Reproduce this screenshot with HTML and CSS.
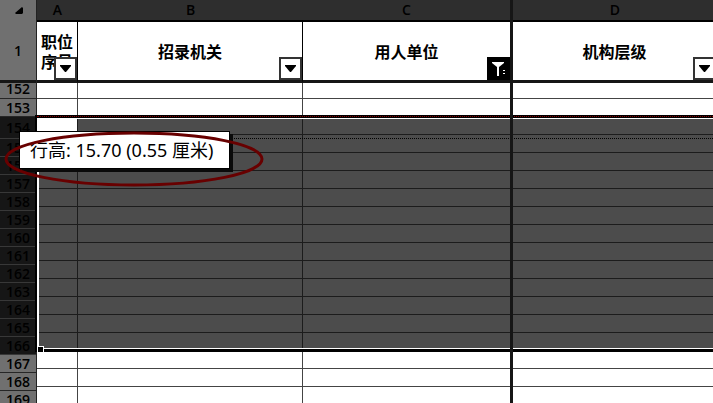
FILE: index.html
```
<!DOCTYPE html>
<html lang="zh-CN">
<head>
    <meta charset="UTF-8">
    <title>职位表</title>
    <link rel="stylesheet" href="styles.css">
</head>
<body>
    <div class="sheet">
        <div class="row-numbers">
            <button type="button" class="corner" aria-label="全选">
                <svg width="8" height="8" viewBox="0 0 8 8"><path d="M7 0L8 1V6L7 7H1L0 6Z"/></svg>
            </button>
            <div class="num first">1</div>
            <div class="num top">152</div>
            <div class="num">153</div>
            <div class="num picked tall">154</div>
            <div class="num picked">155</div>
            <div class="num picked">156</div>
            <div class="num picked">157</div>
            <div class="num picked">158</div>
            <div class="num picked">159</div>
            <div class="num picked">160</div>
            <div class="num picked">161</div>
            <div class="num picked">162</div>
            <div class="num picked">163</div>
            <div class="num picked">164</div>
            <div class="num picked">165</div>
            <div class="num picked">166</div>
            <div class="num">167</div>
            <div class="num">168</div>
            <div class="num">169</div>
        </div>
        <div class="cells">
            <table>
                <colgroup>
                    <col class="col-a">
                    <col class="col-b">
                    <col class="col-c">
                    <col>
                </colgroup>
                <thead>
                    <tr class="letters"><th>A</th><th>B</th><th class="freeze">C</th><th>D</th></tr>
                    <tr class="titles">
                        <th>职位序号
                            <button type="button" class="filter" aria-label="筛选"><svg width="11" height="7" viewBox="0 0 11 7"><path d="M0 0H11V1L6 7H5L0 1Z"/></svg></button>
                        </th>
                        <th>招录机关
                            <button type="button" class="filter" aria-label="筛选"><svg width="11" height="7" viewBox="0 0 11 7"><path d="M0 0H11V1L6 7H5L0 1Z"/></svg></button>
                        </th>
                        <th class="freeze">用人单位
                            <button type="button" class="filter active" aria-label="已筛选"><svg width="14" height="14" viewBox="0 0 14 14"><path d="M0 0H12V1L7 5V14H5V5L0 1ZM11 8H13V9H11ZM11 11H13V12H11Z"/></svg></button>
                        </th>
                        <th>机构层级
                            <button type="button" class="filter" aria-label="筛选"><svg width="11" height="7" viewBox="0 0 11 7"><path d="M0 0H11V1L6 7H5L0 1Z"/></svg></button>
                        </th>
                    </tr>
                </thead>
                <tbody>
                    <tr class="top"><td></td><td></td><td class="freeze"></td><td></td></tr>
                    <tr><td></td><td></td><td class="freeze"></td><td></td></tr>
                    <tr class="picked"><td class="current"></td><td></td><td class="freeze"></td><td></td></tr>
                    <tr class="picked"><td></td><td></td><td class="freeze"></td><td></td></tr>
                    <tr class="picked"><td></td><td></td><td class="freeze"></td><td></td></tr>
                    <tr class="picked"><td></td><td></td><td class="freeze"></td><td></td></tr>
                    <tr class="picked"><td></td><td></td><td class="freeze"></td><td></td></tr>
                    <tr class="picked"><td></td><td></td><td class="freeze"></td><td></td></tr>
                    <tr class="picked"><td></td><td></td><td class="freeze"></td><td></td></tr>
                    <tr class="picked"><td></td><td></td><td class="freeze"></td><td></td></tr>
                    <tr class="picked"><td></td><td></td><td class="freeze"></td><td></td></tr>
                    <tr class="picked"><td></td><td></td><td class="freeze"></td><td></td></tr>
                    <tr class="picked"><td></td><td></td><td class="freeze"></td><td></td></tr>
                    <tr class="picked"><td></td><td></td><td class="freeze"></td><td></td></tr>
                    <tr class="picked"><td></td><td></td><td class="freeze"></td><td></td></tr>
                    <tr><td></td><td></td><td class="freeze"></td><td></td></tr>
                    <tr><td></td><td></td><td class="freeze"></td><td></td></tr>
                    <tr><td></td><td></td><td class="freeze"></td><td></td></tr>
                </tbody>
            </table>
        </div>

        <!-- selection frame and the row resize guide -->
        <div class="selection"><span class="handle"></span></div>
        <div class="guide"></div>
        <div class="freeze-line"></div>

        <div class="tooltip" role="tooltip">行高: 15.70 (0.55 厘米)</div>
        <svg class="mark" width="260" height="56" viewBox="0 0 260 56">
            <ellipse cx="130" cy="28" rx="128" ry="26"/>
        </svg>
    </div>
</body>
</html>
```

FILE: styles.css
```
* { box-sizing: border-box; }
body { margin: 0; background: #fff; color: #000; font-family: "Open Sans", "Noto Sans CJK SC", sans-serif; overflow: hidden; }
button { padding: 0; border: none; cursor: pointer; }
svg { display: block; }

.sheet { position: relative; display: flex; height: 100vh; overflow: hidden; }

/* row numbers */
.row-numbers { flex: 0 0 37px; border-right: 1px solid #222; background: #707070; }
.corner { display: flex; align-items: center; justify-content: flex-end; width: 100%; height: 22px; padding-right: 13px; background: none; }
.num { display: flex; align-items: center; justify-content: flex-end; height: 18px; padding-right: 6px; border-bottom: 1px solid #262626; font-size: 14px; font-weight: 600; line-height: 14px; }
.num.first { height: 61px; padding-right: 14px; border-bottom: 3px solid #161616; }
.num.top { height: 16px; align-items: flex-start; line-height: 12px; }
.num.picked { background: #161616; border-bottom-color: #383838; }
.num.tall { height: 22px; }

/* grid */
.cells { flex: 1; min-width: 0; }
table { width: calc(100% + 4px); table-layout: fixed; border-spacing: 0; }
.col-a { width: 41px; }
.col-b { width: 225px; }
.col-c { width: 210px; }
th, td { padding: 0; border-right: 1px solid #444; border-bottom: 1px solid #444; }
td { height: 18px; }
.top td { height: 16px; }
.letters th { height: 22px; background: #2e2e2e; border-right: none; border-bottom: 2px solid #000; font-size: 14px; font-weight: 600; line-height: 20px; }
.titles th { position: relative; height: 61px; border-right-color: #000; border-bottom: 3px solid #161616; font-family: "Noto Sans CJK SC", sans-serif; font-size: 16px; font-weight: 700; line-height: 20px; }
.picked td { background: #4c4c4c; border-color: #1c1c1c; }
.picked td.current { background: #fff; }
th.freeze, .titles th.freeze, td.freeze, .picked td.freeze { border-right: 3px solid #161616; }

.filter { position: absolute; right: 0; bottom: 0; display: flex; align-items: center; justify-content: center; width: 23px; height: 23px; background: #fff; border: 2px solid #333; }
.filter.active { background: #000; border-color: #000; fill: #fff; }

/* selection */
.selection { position: absolute; top: 115px; left: 35px; right: -4px; height: 237px; border: solid #000; border-width: 3px 0 3px 2px; box-shadow: inset 2px 1px #fff, inset 0 -1px #fff; }
.selection::before { content: ""; position: absolute; top: -2px; left: 0; right: 0; border-top: 1px dotted #8a0000; }
.handle { position: absolute; left: 0; bottom: -4px; width: 7px; height: 7px; background: #000; border: solid #fff; border-width: 1px; }
.guide { position: absolute; top: 138px; left: 37px; right: 0; border-top: 1px dotted #000; }
.freeze-line { position: absolute; top: 0; bottom: 0; left: 510px; width: 3px; background: #161616; }

.tooltip { position: absolute; top: 131px; left: 19px; padding: 6px 16px 6px 10px; background: #fff; border: 1px solid #000; box-shadow: 3px 3px #0a0a0a; font-family: "Noto Sans", "Noto Sans CJK SC", sans-serif; font-size: 18px; line-height: 24px; white-space: nowrap; }
.mark { position: absolute; top: 131px; left: 4px; fill: none; stroke: #680000; stroke-width: 3; }
```
